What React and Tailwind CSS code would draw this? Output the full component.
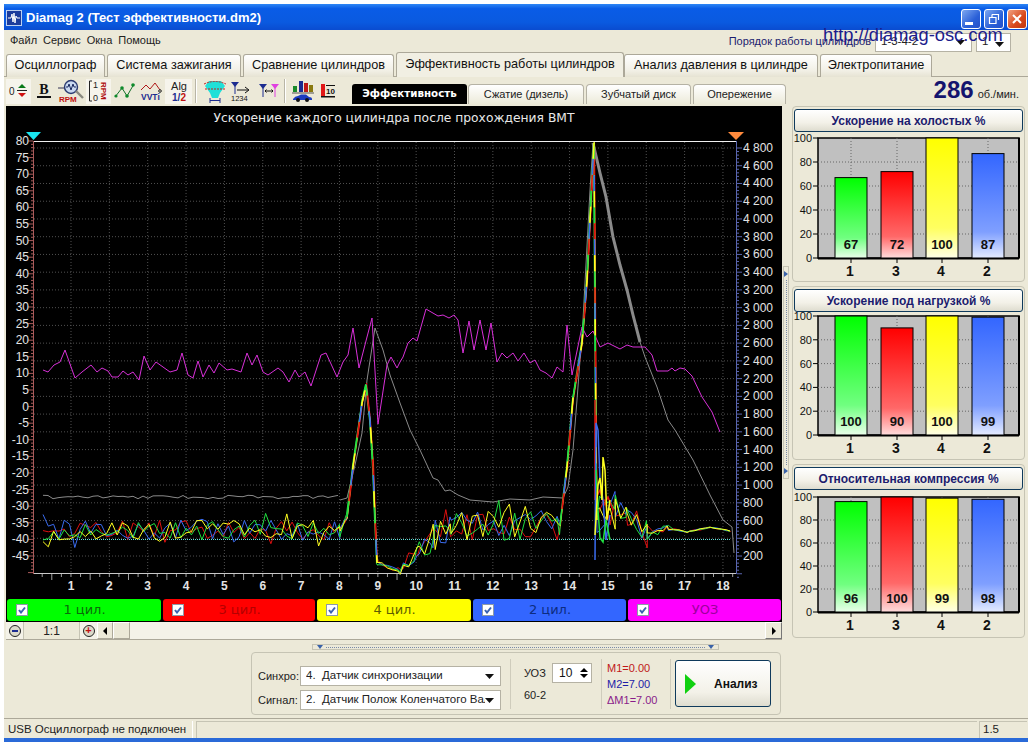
import React from 'react';

// hand-read traces of the chart, in page pixels
const MAGENTA = [[43,370],[48,372],[54,365],[60,362],[65,350],[75,378],[82,372],[91,365],[97,372],[102,368],[108,371],[112,377],[118,377],[123,371],[128,375],[133,372],[139,380],[144,356],[150,370],[156,362],[163,367],[170,372],[177,370],[182,353],[188,375],[193,378],[198,361],[203,377],[209,365],[214,373],[219,363],[227,370],[232,369],[241,372],[247,353],[252,365],[257,355],[263,372],[268,375],[278,368],[283,372],[289,382],[295,370],[299,377],[305,372],[311,386],[321,355],[326,353],[337,377],[343,362],[348,355],[353,328],[359,368],[367,337],[372,318],[378,424],[387,365],[391,357],[397,368],[400,362],[403,357],[408,343],[413,338],[417,341],[426,309],[438,316],[443,315],[449,318],[454,315],[458,320],[463,353],[469,321],[474,350],[480,320],[486,350],[491,323],[497,362],[502,353],[507,358],[513,353],[518,361],[524,353],[530,363],[535,360],[540,370],[546,373],[552,378],[557,367],[563,372],[567,325],[572,375],[582,327],[587,337],[593,331],[600,347],[608,343],[620,349],[627,345],[633,347],[645,347],[652,355],[657,371],[668,371],[672,368],[675,371],[680,368],[685,369],[692,376],[702,397],[712,412],[720,432]];
const GRAY_THIN_A = [[340,500],[347,498],[355,465],[362,433],[367,380],[375,328],[383,350],[390,375],[400,403],[410,430],[420,450],[433,478],[438,480],[445,491],[450,490],[458,495],[470,500],[493,502],[510,499],[530,500],[543,497],[563,498],[568,487],[573,450],[577,400],[583,320],[590,190],[593,143]];
const GRAY_THICK = [[593,143],[600,173],[606,197],[613,237],[620,265],[627,290],[633,315],[640,342]];
const GRAY_THIN_B = [[640,342],[645,357],[657,387],[668,420],[675,430],[693,460],[710,495],[723,520],[732,527],[734,553]];
const ENVELOPE = [[38,530],[340,530],[347,517],[353,467],[362,403],[366,385],[370,420],[373,467],[375,520],[377,563],[400,571],[417,553],[433,536],[450,527],[560,525],[567,467],[573,398],[582,343],[587,280],[592,180],[594,143],[595,300],[596,450],[597,520],[615,507],[627,517],[647,533],[667,528],[687,532],[710,527],[730,531]];
const PEAKS = [
  [[347,517],[353,467],[362,403],[366,385],[370,420],[373,467],[375,520],[377,563]],
  [[560,525],[567,467],[573,398],[582,343],[587,280],[592,180],[594,143],[595,300],[596,450],[597,520]],
];
// the scatter right after the second peak, one line per cylinder
const AFTER_PEAK = [
  ['#e01010', [[595,400],[595,500],[600,490],[604,505],[608,497],[613,510]]],
  ['#3a6cf0', [[595,560],[596,423],[598,430],[600,480],[603,500],[606,540],[610,515]]],
  ['#20e040', [[596,470],[598,510],[600,538],[603,542],[606,520],[610,540]]],
  ['#ffff20', [[595,535],[598,485],[600,478],[602,500],[603,457],[605,470],[607,520],[610,500]]],
];
const PEAK_COLORS = ['#20e040', '#e01010', '#3a6cf0', '#ffff20'];

const mulberry = (seed) => () => {
  seed = (seed + 0x6d2b79f5) | 0;
  let t = Math.imul(seed ^ (seed >>> 15), 1 | seed);
  t = (t + Math.imul(t ^ (t >>> 7), 61 | t)) ^ t;
  return ((t ^ (t >>> 14)) >>> 0) / 4294967296;
};

const envelopeAt = (x) => {
  for (let i = 1; i < ENVELOPE.length; i++) {
    const [x0, y0] = ENVELOPE[i - 1];
    const [x1, y1] = ENVELOPE[i];
    if (x <= x1) return y0 + ((y1 - y0) * (x - x0)) / (x1 - x0 || 1);
  }
  return ENVELOPE[ENVELOPE.length - 1][1];
};

const noiseAt = (x) => {
  if (x < 342) return 10;
  if (x < 400) return 2;
  if (x < 420) return 6;
  if (x < 560) return 15;
  if (x < 597) return 1;
  if (x < 625) return 16;
  if (x < 650) return 10;
  if (x < 670) return 3;
  return 0.6;
};

const makeTrace = (seed, shift) => {
  const rnd = mulberry(seed);
  const xs = [];
  for (let x = 43; x < 730; x += 5.3) xs.push(x);
  ENVELOPE.slice(1).forEach(([x]) => xs.push(x + shift));
  xs.sort((a, b) => a - b);
  return xs
    .map((x) => {
      const spike = rnd() < 0.1 ? 1.8 : 1;
      const y = envelopeAt(x - shift) + (rnd() - 0.5) * 2 * noiseAt(x) * spike;
      return `${x.toFixed(1)},${y.toFixed(1)}`;
    })
    .join(' ');
};

const TRACES = [
  ['#e01010', makeTrace(11, 0.6)],
  ['#3a6cf0', makeTrace(23, 0)],
  ['#20e040', makeTrace(37, -0.5)],
  ['#ffff20', makeTrace(53, 0.2)],
];

const pts = (list) => list.map((p) => p.join(',')).join(' ');

const GRAY_FLAT = (() => {
  const rnd = mulberry(7);
  const out = [];
  for (let x = 43; x < 340; x += 5) out.push([x, (497 + (rnd() - 0.5) * 3.5).toFixed(1)]);
  return out;
})();

const LEFT_LABELS = Array.from({ length: 26 }, (_, i) => 80 - i * 5);
const RIGHT_LABELS = Array.from({ length: 24 }, (_, i) => 4800 - i * 200);
const X_LABELS = Array.from({ length: 18 }, (_, i) => i + 1);

const fmt = (v) => (v >= 1000 ? `${Math.floor(v / 1000)} ${String(v % 1000).padStart(3, '0')}` : v);
const leftY = (i) => 141 + i * 16.6;
const rightY = (i) => 148 + i * 17.74;
const xAt = (i) => 71 + i * 38.35;

function MainChart() {
  return (
    <svg viewBox="6 106 776 492" className="block w-[776px] h-[492px]">
      <rect x="6" y="106" width="776" height="492" fill="#000" />
      <text x="394" y="122" fill="#e8e8e8" fontSize="12.3" textAnchor="middle" fontFamily="DejaVu Sans">
        Ускорение каждого цилиндра после прохождения ВМТ
      </text>
      <polygon points="26,132 41,132 33.5,140" fill="#19e6f0" />
      <polygon points="728,132 744,132 736,140" fill="#ff8a3c" />

      {/* grid */}
      {RIGHT_LABELS.map((_, i) => (
        <line key={i} x1="34" x2="735" y1={rightY(i)} y2={rightY(i)} stroke="#505050" strokeDasharray="1 2" />
      ))}
      {X_LABELS.map((_, i) => (
        <line key={i} x1={xAt(i)} x2={xAt(i)} y1="142" y2="573" stroke="#505050" strokeDasharray="1 2" />
      ))}

      {/* axes */}
      <line x1="33" x2="736" y1="141.5" y2="141.5" stroke="#f0f0f0" />
      <line x1="33" x2="736" y1="573.5" y2="573.5" stroke="#c8c8c8" />
      <line x1="33.5" x2="33.5" y1="141" y2="574" stroke="#a85a5a" />
      <line x1="736.5" x2="736.5" y1="141" y2="574" stroke="#5a66b0" />
      {Array.from({ length: 131 }, (_, i) => (
        <line key={i} x1={i % 5 === 0 ? 28 : 31} x2="33" y1={141 + i * 3.32} y2={141 + i * 3.32} stroke="#a85a5a" />
      ))}
      {Array.from({ length: 122 }, (_, i) => (
        <line key={i} x1="737" x2={i % 5 === 0 ? 742 : 739} y1={148 + i * 3.548} y2={148 + i * 3.548} stroke="#5a66b0" />
      ))}
      {Array.from({ length: 73 }, (_, i) => (
        <line key={i} x1={42.2 + i * 9.59} x2={42.2 + i * 9.59} y1="574" y2={(i + 3) % 4 === 0 ? 580 : 577} stroke="#a0a0a0" />
      ))}

      <g fontSize="12" fill="#e4e4e4">
        {LEFT_LABELS.map((v, i) => (
          <text key={v} x="29" y={leftY(i) + 4} textAnchor="end">{v}</text>
        ))}
        {RIGHT_LABELS.map((v, i) => (
          <text key={v} x="743" y={rightY(i) + 4}>{fmt(v)}</text>
        ))}
        {X_LABELS.map((v, i) => (
          <text key={v} x={xAt(i)} y="590" textAnchor="middle" fontWeight="700">{v}</text>
        ))}
      </g>

      {/* traces */}
      <line x1="43" x2="730" y1="539.5" y2="539.5" stroke="#60e0d8" strokeDasharray="1 1" />
      <polyline points={pts(GRAY_FLAT)} fill="none" stroke="#8a8a8a" />
      <polyline points={pts(GRAY_THIN_A)} fill="none" stroke="#8a8a8a" />
      <polyline points={pts(GRAY_THICK)} fill="none" stroke="#8a8a8a" strokeWidth="3" />
      <polyline points={pts(GRAY_THIN_B)} fill="none" stroke="#8a8a8a" />
      <polyline points={pts(MAGENTA)} fill="none" stroke="#d830d8" />
      {TRACES.map(([color, p]) => (
        <polyline key={color} points={p} fill="none" stroke={color} />
      ))}
      {PEAKS.map((peak, n) =>
        PEAK_COLORS.map((color, i) => (
          <polyline
            key={`${n}${color}`}
            points={pts(peak)}
            fill="none"
            stroke={color}
            strokeWidth="1.5"
            strokeDasharray="16 48"
            strokeDashoffset={-i * 16}
          />
        ))
      )}
      {AFTER_PEAK.map(([color, line]) => (
        <polyline key={color} points={pts(line)} fill="none" stroke={color} strokeWidth="1.5" />
      ))}
    </svg>
  );
}

const BAR_COLORS = [
  ['g', '#00ff00', '#70ff80', '#eaffea'],
  ['r', '#ff0000', '#ff6868', '#ffdcdc'],
  ['y', '#ffff00', '#ffff60', '#ffffe6'],
  ['b', '#3366ff', '#7f9fff', '#e4ebff'],
];
const BAR_X = [42, 88, 133, 179];
const BAR_NAMES = ['1', '3', '4', '2'];

function BarPanel({ id, title, values, top, height, panelH }) {
  const bottom = top + height;
  return (
    <div className="border border-[#c6c4b4] rounded-[4px] flex flex-col" style={{ height: panelH }}>
      <div className="mx-[1px] mt-[2px] h-[23px] shrink-0 border border-[#0f3a5c] rounded-[3px] bg-[linear-gradient(#ffffff,#f3f1e8_60%,#dedccf)] flex items-center justify-center text-[12px] font-bold text-[#1c1c6e] whitespace-nowrap">
        {title}
      </div>
      <svg className="block w-[231px] flex-1">
        <defs>
          {BAR_COLORS.map(([k, a, m, b]) => (
            <linearGradient key={k} id={`${id}${k}`} x1="0" x2="0" y1="0" y2="1">
              <stop offset="0" stopColor={a} />
              <stop offset="0.75" stopColor={m} />
              <stop offset="1" stopColor={b} />
            </linearGradient>
          ))}
        </defs>
        <rect x="25" y={top} width="201" height={height} fill="#c0c0c0" stroke="#000" strokeWidth="1.5" />
        {[20, 40, 60, 80].map((v) => {
          const y = bottom - (height * v) / 100;
          return <line key={v} x1="25" x2="226" y1={y} y2={y} stroke="#666" strokeDasharray="1 2" />;
        })}
        {BAR_X.map((x) => (
          <line key={x} x1={x + 16} x2={x + 16} y1={top} y2={bottom} stroke="#666" strokeDasharray="1 2" />
        ))}
        <line x1="25" x2="226" y1={bottom + 0.5} y2={bottom + 0.5} stroke="#000" strokeWidth="2" />
        <line x1="226" x2="226" y1={top} y2={bottom} stroke="#000" strokeWidth="2" />
        {[0, 20, 40, 60, 80, 100].map((v) => {
          const y = bottom - (height * v) / 100;
          return (
            <g key={v}>
              <line x1="20" x2="25" y1={y} y2={y} stroke="#000" />
              <text x="19" y={y + 4} fontSize="11" fill="#111" textAnchor="end">{v}</text>
            </g>
          );
        })}
        {BAR_X.map((x, i) => {
          const h = (height * values[i]) / 100;
          return (
            <g key={x}>
              <rect x={x} y={bottom - h} width="32" height={h} fill={`url(#${id}${BAR_COLORS[i][0]})`} stroke="#000" />
              <line x1={x + 16} x2={x + 16} y1={bottom} y2={bottom + 5} stroke="#000" />
              <text x={x + 16} y={bottom - 9} fontSize="13" fontWeight="700" fill="#111" textAnchor="middle">{values[i]}</text>
              <text x={x + 15} y={bottom + 18} fontSize="14" fontWeight="700" fill="#111" textAnchor="middle">{BAR_NAMES[i]}</text>
            </g>
          );
        })}
      </svg>
    </div>
  );
}

const Arrow = ({ className = '' }) => (
  <svg width="9" height="5" viewBox="0 0 9 5" className={`shrink-0 ${className}`}>
    <polygon points="0,0 9,0 4.5,5" fill="#111" />
  </svg>
);

function Select({ value, w, h = 'h-[20px]', arrowCls = '' }) {
  return (
    <div className={`${w} ${h} bg-white border border-[#b5b2a4] flex items-center pl-[5px] pr-[6px] text-[11.5px] text-[#222]`}>
      <span className="flex-1 min-w-0 overflow-hidden whitespace-pre">{value}</span>
      <Arrow className={arrowCls} />
    </div>
  );
}

const TOP_TABS = [
  ['Осциллограф', 'w-[99px]'],
  ['Система зажигания', 'w-[134px]'],
  ['Сравнение цилиндров', 'w-[151px]'],
];

function TopTab({ label, w, active }) {
  return (
    <div
      className={`${w} shrink-0 border border-[#aca899] border-b-0 rounded-t-[3px] flex items-center justify-center text-[12.7px] whitespace-nowrap text-[#111] ${
        active ? 'h-[25px] bg-[#f1efe3] -mt-[1px]' : 'h-[23px] bg-[linear-gradient(#ffffff,#f2f0e6_70%,#e6e3d3)] mt-[1px] mr-[2px]'
      }`}
    >
      {label}
    </div>
  );
}

function SubTab({ label, w }) {
  return (
    <div className={`${w} h-[20px] shrink-0 border border-[#b5b2a4] border-b-0 rounded-t-[4px] bg-[linear-gradient(#ffffff,#ecead9)] flex items-center justify-center text-[11px] text-[#222] mr-[2px]`}>
      {label}
    </div>
  );
}

function ToolBtn({ w, pressed, children }) {
  return (
    <div className={`${w} h-[25px] shrink-0 flex items-center justify-center ${pressed ? 'bg-[#f6f4ec]' : ''}`}>
      {children}
    </div>
  );
}

const LEGEND = [
  ['1 цил.', 'bg-[#00ff00]', 'text-[#0b6a0b]', 'w-[154px]'],
  ['3 цил.', 'bg-[#ff0000]', 'text-[#b40000]', 'w-[152px]'],
  ['4 цил.', 'bg-[#ffff00]', 'text-[#5e5e00]', 'w-[154px]'],
  ['2 цил.', 'bg-[#3366ff]', 'text-[#0d2c80]', 'w-[153px]'],
  ['УОЗ', 'bg-[#ff00ff]', 'text-[#9c009c]', 'w-[153px]'],
];

const Check = () => (
  <span className="w-[12px] h-[12px] bg-white border border-[#8d9aa8] flex items-center justify-center shrink-0">
    <svg width="8" height="8" viewBox="0 0 8 8">
      <path d="M1 4 L3 6.5 L7 1.5" fill="none" stroke="#3a62b0" strokeWidth="2" />
    </svg>
  </span>
);

const WinBtn = ({ close, children }) => (
  <div
    className={`w-[20px] h-[20px] rounded-[3px] border border-white flex items-center justify-center ${
      close ? 'bg-[linear-gradient(135deg,#f0a080,#d8481c_60%,#c03810)]' : 'bg-[linear-gradient(135deg,#7ea8f0,#2a60d8_60%,#2450c8)]'
    }`}
  >
    {children}
  </div>
);

export default function App() {
  return (
    <div className="w-[1032px] h-[742px] bg-white pt-[4px] pl-[4px] pr-[4px] overflow-hidden font-['Liberation_Sans',sans-serif]">
      <div className="w-[1024px] h-[738px] bg-[#ece9d8] flex flex-col relative">
        {/* title bar */}
        <div className="h-[26px] shrink-0 bg-[linear-gradient(#2d86f5,#0a5ce6_18%,#0a5ae0_70%,#0a4cd0)] flex items-center pl-[2px] pr-[1px]">
          <svg width="16" height="16" viewBox="0 0 16 16" className="mt-[1px]">
            <rect x="0.5" y="0.5" width="15" height="15" fill="#1c3c9c" stroke="#bcd0f0" />
            <path d="M2 8 H5 L6 4 L7 12 L8 3 L9 13 L10 6 L11 8 H14" fill="none" stroke="#fff" />
          </svg>
          <span className="ml-[4px] mt-[1px] text-[13px] font-bold text-white whitespace-nowrap">Diamag 2 (Тест эффективности.dm2)</span>
          <div className="ml-auto flex gap-[3px] mt-[3px]">
            <WinBtn>
              <span className="block w-[8px] h-[3px] bg-white mt-[9px] -ml-[4px]" />
            </WinBtn>
            <WinBtn>
              <svg width="12" height="12" viewBox="0 0 12 12">
                <path d="M4 1.5 H10.5 V7 M1.5 4.5 H8 V10.5 H1.5 Z M4 1.5 V4" fill="none" stroke="#fff" strokeWidth="1.2" />
              </svg>
            </WinBtn>
            <WinBtn close>
              <svg width="12" height="12" viewBox="0 0 12 12">
                <path d="M2 2 L10 10 M10 2 L2 10" stroke="#fff" strokeWidth="2" />
              </svg>
            </WinBtn>
          </div>
        </div>

        {/* menu */}
        <div className="h-[22px] shrink-0 flex items-center pl-[6px] text-[11px] text-[#222] relative">
          <div className="flex gap-[6px] -mt-[1px]">
            <span>Файл</span>
            <span>Сервис</span>
            <span>Окна</span>
            <span>Помощь</span>
          </div>
          <span className="ml-auto text-[#1c1c6e]">Порядок работы цилиндров</span>
          <div className="ml-[4px] mr-[17px] flex gap-[4px] mt-[2px]">
            <Select value="1-3-4-2" w="w-[97px]" h="h-[19px]" />
            <Select value="1" w="w-[35px]" h="h-[19px]" arrowCls="mt-[4px]" />
          </div>
          {/* the site address is stamped over the picture */}
          <span className="absolute left-[819px] -top-[9px] text-[18.3px] text-[#1c1c8c] whitespace-nowrap">
            http://diamag-osc.com
          </span>
        </div>

        {/* main tabs */}
        <div className="h-[25px] shrink-0 flex items-start pl-[2px] border-b border-[#aca899] pt-[1px]">
          {TOP_TABS.map(([label, w]) => (
            <TopTab key={label} label={label} w={w} />
          ))}
          <TopTab label="Эффективность работы цилиндров" w="w-[228px]" active />
          <TopTab label="Анализ давления в цилиндре" w="w-[194px]" />
          <TopTab label="Электропитание" w="w-[112px]" />
        </div>

        {/* toolbar */}
        <div className="h-[27px] shrink-0 flex items-end pl-[2px] relative">
          <div className="flex items-center h-[26px]">
            <ToolBtn w="w-[25px]" pressed>
              <svg width="22" height="20" viewBox="0 0 22 20">
                <text x="1" y="14" fontSize="10" fill="#222">0</text>
                <polygon points="14,3 18,7 10,7" fill="#0a7a1a" />
                <line x1="9" x2="19" y1="9.5" y2="9.5" stroke="#222" />
                <polygon points="10,12 18,12 14,16" fill="#d01010" />
              </svg>
            </ToolBtn>
            <ToolBtn w="w-[25px]">
              <svg width="20" height="20" viewBox="0 0 20 20">
                <text x="10" y="13" fontSize="14" fontWeight="700" fontFamily="Liberation Serif" fill="#111" textAnchor="middle">B</text>
                <rect x="3" y="15" width="14" height="2" fill="#111" />
              </svg>
            </ToolBtn>
            <ToolBtn w="w-[30px]">
              <svg width="26" height="24" viewBox="0 0 26 24">
                <line x1="0" x2="7" y1="9" y2="9" stroke="#335" />
                <circle cx="13" cy="8" r="6.5" fill="#c9d8f0" stroke="#2a3a70" strokeWidth="1.4" />
                <path d="M8 8 H10 L11 5 L13 11 L15 5 L16 8 H18" fill="none" stroke="#1a2a60" />
                <line x1="18" x2="25" y1="12" y2="19" stroke="#8a8a80" strokeWidth="2.4" />
                <text x="1" y="23" fontSize="8" fontWeight="700" fill="#c01010">RPM</text>
              </svg>
            </ToolBtn>
            <ToolBtn w="w-[25px]" pressed>
              <svg width="22" height="24" viewBox="0 0 22 24">
                <path d="M4 2 H1.5 V22 H4" fill="none" stroke="#222" />
                <text x="5" y="9" fontSize="9" fill="#222">1</text>
                <text x="5" y="22" fontSize="9" fill="#222">0</text>
                <text x="0" y="0" fontSize="8" fontWeight="700" fill="#b01010" transform="translate(13 3) rotate(90)">RPM</text>
              </svg>
            </ToolBtn>
            <ToolBtn w="w-[27px]">
              <svg width="22" height="20" viewBox="0 0 22 20">
                <path d="M1 16 L8 7 L13 15 L20 3" fill="none" stroke="#14702a" />
                <g fill="#0e8a2a">
                  <circle cx="2" cy="15" r="1.6" />
                  <circle cx="8" cy="7" r="1.8" />
                  <circle cx="13" cy="15" r="1.8" />
                  <circle cx="19" cy="4" r="1.8" />
                </g>
              </svg>
            </ToolBtn>
            <ToolBtn w="w-[27px]">
              <svg width="23" height="22" viewBox="0 0 23 22">
                <path d="M1 10 L6 5 L10 9 L15 3 L20 10" fill="none" stroke="#b01818" />
                <text x="1" y="20" fontSize="8.5" fontWeight="700" fill="#1c2c90">VVTi</text>
                <circle cx="20" cy="11" r="1.3" fill="none" stroke="#222" />
              </svg>
            </ToolBtn>
            <ToolBtn w="w-[27px]" pressed>
              <svg width="22" height="24" viewBox="0 0 22 24">
                <text x="11" y="11" fontSize="11" fill="#222" textAnchor="middle">Alg</text>
                <text x="11" y="22" fontSize="10" fontWeight="700" textAnchor="middle">
                  <tspan fill="#1c2c90">1/</tspan>
                  <tspan fill="#c01010">2</tspan>
                </text>
              </svg>
            </ToolBtn>
            <div className="w-[2px] h-[24px] bg-[#b8b5a6] border-r border-white ml-[3px] mr-[5px]" />
            <ToolBtn w="w-[26px]">
              <svg width="24" height="24" viewBox="0 0 24 24">
                <path d="M6 2 L18 2 L22 7 L17 14 L15 19 L9 19 L7 14 L2 7 Z" fill="#20e0d8" />
                <path d="M1 5 Q12 0 23 5 M2 10 H22" fill="none" stroke="#c02020" strokeDasharray="2 1" />
                <path d="M7 21.5 H17 M7 19 V24 M17 19 V24" stroke="#1c2c90" fill="none" />
              </svg>
            </ToolBtn>
            <ToolBtn w="w-[26px]">
              <svg width="22" height="22" viewBox="0 0 22 22">
                <polygon points="1,2 9,2 5,7" fill="#1c2c90" />
                <line x1="5" x2="5" y1="6" y2="14" stroke="#1c2c90" />
                <path d="M7 10 H18 M15 7 L19 10 L15 13" fill="none" stroke="#111" />
                <text x="1" y="21" fontSize="7.5" fill="#111">1234</text>
              </svg>
            </ToolBtn>
            <div className="ml-[3px]">
              <ToolBtn w="w-[24px]">
                <svg width="22" height="20" viewBox="0 0 22 20">
                  <polygon points="1,3 9,3 5,8" fill="#1c2c90" />
                  <line x1="5" x2="5" y1="7" y2="16" stroke="#1c2c90" />
                  <polygon points="13,3 21,3 17,8" fill="#e040e0" />
                  <line x1="17" x2="17" y1="7" y2="16" stroke="#e040e0" />
                  <path d="M7 10 H15 M8.5 8.5 L7 10 L8.5 11.5 M13.5 8.5 L15 10 L13.5 11.5" fill="none" stroke="#111" />
                </svg>
              </ToolBtn>
            </div>
            <div className="w-[2px] h-[24px] bg-[#b8b5a6] border-r border-white ml-[3px] mr-[5px]" />
            <ToolBtn w="w-[24px]">
              <svg width="22" height="24" viewBox="0 0 22 24">
                <rect x="1" y="7" width="4" height="6" fill="#1a8a2a" />
                <rect x="7" y="2" width="4" height="11" fill="#1c2c90" />
                <rect x="12" y="4" width="4" height="9" fill="#c01818" />
                <rect x="17" y="6" width="4" height="7" fill="#8a7a10" />
                <line x1="0" x2="22" y1="14" y2="14" stroke="#555" />
                <path d="M1 20 Q3 17 6 17 L9 15.5 H14 L17 18 Q20 18 20 20 V21 H1 Z" fill="#1c3cc0" />
                <circle cx="6" cy="21" r="2" fill="#111" />
                <circle cx="15" cy="21" r="2" fill="#111" />
              </svg>
            </ToolBtn>
            <div className="ml-[2px]">
              <ToolBtn w="w-[22px]">
                <svg width="18" height="18" viewBox="0 0 18 18">
                  <rect x="2" y="2" width="4" height="12" fill="#e01818" />
                  <rect x="2" y="14" width="14" height="1.5" fill="#111" />
                  <text x="7" y="12" fontSize="8" fontWeight="700" fill="#111">10</text>
                  <rect x="7" y="3" width="9" height="1" fill="#111" />
                </svg>
              </ToolBtn>
            </div>
          </div>
          <div className="ml-[13px] flex items-end">
            <div className="w-[115px] h-[20px] bg-black rounded-t-[3px] flex items-center justify-center text-[10.3px] font-bold text-white mr-[1px] font-['DejaVu_Sans']">
              Эффективность
            </div>
            <SubTab label="Сжатие (дизель)" w="w-[116px]" />
            <SubTab label="Зубчатый диск" w="w-[105px]" />
            <SubTab label="Опережение" w="w-[93px]" />
          </div>
          <div className="ml-auto mr-[9px] mb-[1px] flex items-baseline">
            <span className="text-[24px] leading-[26px] font-bold text-[#14146e]">286</span>
            <span className="ml-[4px] text-[11px] text-[#222]">об./мин.</span>
          </div>
        </div>

        {/* chart and side panels */}
        <div className="h-[536px] shrink-0 flex pl-[2px]">
          <div className="w-[776px] pt-[2px]">
            <MainChart />
            <div className="bg-black h-[24px] flex gap-[2px] p-[1px]">
              {LEGEND.map(([label, bg, fg, w]) => (
                <div key={label} className={`${w} ${bg} ${fg} shrink-0 rounded-[3px] flex items-center pl-[9px] text-[13px] font-['DejaVu_Sans']`}>
                  <Check />
                  <span className="flex-1 text-center pr-[20px]">{label}</span>
                </div>
              ))}
            </div>
            <div className="h-[18px] flex items-stretch bg-[#f4f2e8] border-b border-[#aca899]">
              <div className="w-[17px] flex items-center justify-center">
                <span className="w-[12px] h-[12px] rounded-full border border-[#222] bg-[#dcdaca] flex items-center justify-center">
                  <span className="w-[6px] h-[2px] bg-[#1c2c90]" />
                </span>
              </div>
              <div className="w-[57px] bg-[#ece9d8] border-x border-[#c6c4b4] text-center text-[12px] leading-[18px] text-[#222]">1:1</div>
              <div className="w-[17px] flex items-center justify-center">
                <span className="w-[12px] h-[12px] rounded-full border border-[#222] bg-[#dcdaca] flex items-center justify-center text-[11px] leading-none font-bold text-[#c01010]">+</span>
              </div>
              <div className="w-[16px] bg-[#ece9d8] border border-white border-r-[#aca899] border-b-[#aca899] flex items-center justify-center">
                <span className="w-0 h-0 border-y-[4px] border-y-transparent border-r-[4px] border-r-black" />
              </div>
              <div className="w-[17px] bg-[#ece9d8] border border-white border-r-[#aca899] border-b-[#aca899]" />
              <div className="flex-1" />
              <div className="w-[17px] bg-[#ece9d8] border border-white border-r-[#777] border-b-[#777] flex items-center justify-center">
                <span className="w-0 h-0 border-y-[4px] border-y-transparent border-l-[4px] border-l-black" />
              </div>
            </div>
          </div>
          <div className="ml-[1px] w-[6px] h-[213px] self-center border border-[#c6c4b4] flex flex-col justify-between items-center py-[4px]">
            <span className="w-0 h-0 border-y-[3px] border-y-transparent border-l-[4px] border-l-[#3a62a8]" />
            <span className="flex-1 my-[3px] border-l border-dotted border-[#7a8aa8]" />
            <span className="w-0 h-0 border-y-[3px] border-y-transparent border-l-[4px] border-l-[#3a62a8]" />
          </div>
          <div className="ml-[3px] w-[233px] pt-[2px] flex flex-col gap-[4px]">
            <BarPanel id="p1" title="Ускорение на холостых %" values={[67, 72, 100, 87]} top={6} height={120} panelH={176} />
            <BarPanel id="p2" title="Ускорение под нагрузкой %" values={[100, 90, 100, 99]} top={4} height={119} panelH={174} />
            <BarPanel id="p3" title="Относительная компрессия %" values={[96, 100, 99, 98]} top={7} height={115} panelH={174} />
          </div>
        </div>

        {/* horizontal splitter */}
        <div className="mt-[4px] ml-[308px] w-[407px] h-[6px] shrink-0 border border-[#c6c4b4] flex items-center justify-between px-[4px]">
          <span className="w-0 h-0 border-x-[3px] border-x-transparent border-t-[4px] border-t-[#3a62a8]" />
          <span className="flex-1 mx-[3px] border-t border-dotted border-[#7a8aa8]" />
          <span className="w-0 h-0 border-x-[3px] border-x-transparent border-t-[4px] border-t-[#3a62a8]" />
        </div>

        {/* analysis panel */}
        <div className="mt-[2px] ml-[247px] w-[530px] h-[63px] shrink-0 border border-[#c6c4b4] rounded-[4px] flex items-center pl-[6px] text-[12px] text-[#222]">
          <div className="w-[243px] mt-[9px] flex flex-col gap-[4px]">
            <div className="flex items-center">
              <span className="w-[42px] text-[11px]">Синхро:</span>
              <Select value="4.  Датчик синхронизации" w="w-[201px]" />
            </div>
            <div className="flex items-center">
              <span className="w-[42px] text-[11px]">Сигнал:</span>
              <Select value="2.  Датчик Полож Коленчатого Вала" w="w-[201px]" />
            </div>
          </div>
          <div className="ml-[9px] w-px h-[50px] bg-[#cfccbc]" />
          <div className="ml-[13px] w-[68px] flex flex-col gap-[4px]">
            <div className="flex items-center">
              <span className="w-[28px] text-[11px]">УОЗ</span>
              <div className="w-[40px] h-[20px] bg-white border border-[#b5b2a4] flex items-center pl-[6px] pr-[3px] text-[12px] text-[#111]">
                <span className="flex-1">10</span>
                <span className="flex flex-col gap-[2px]">
                  <span className="w-0 h-0 border-x-[4px] border-x-transparent border-b-[4px] border-b-black" />
                  <span className="w-0 h-0 border-x-[4px] border-x-transparent border-t-[4px] border-t-black" />
                </span>
              </div>
            </div>
            <span className="text-[11px]">60-2</span>
          </div>
          <div className="ml-[9px] w-px h-[50px] bg-[#cfccbc]" />
          <div className="ml-[5px] w-[63px] flex flex-col text-[11px] leading-[16px]">
            <span className="text-[#c01818]">M1=0.00</span>
            <span className="text-[#1c1ca8]">M2=7.00</span>
            <span className="text-[#8a1c8a]">ΔM1=7.00</span>
          </div>
          <div className="w-px h-[50px] bg-[#cfccbc]" />
          <div className="ml-[4px] w-[96px] h-[47px] border border-[#0f3a5c] rounded-[3px] bg-[linear-gradient(#ffffff,#f3f1e8_70%,#dedccf)] flex items-center pl-[9px]">
            <span className="w-0 h-0 border-y-[10px] border-y-transparent border-l-[11px] border-l-[#10d010]" />
            <span className="ml-[18px] text-[12px] font-bold text-[#111]">Анализ</span>
          </div>
        </div>

        {/* status bar */}
        <div className="mt-[3px] h-[20px] shrink-0 border-t border-[#aca899] flex items-stretch text-[11.5px] text-[#222] pt-[2px]">
          <div className="w-[189px] pl-[4px] border-r border-white flex items-center whitespace-nowrap">USB Осциллограф не подключен</div>
          <div className="flex-1 ml-[3px] border-l border-t border-[#c6c4b4]" />
          <div className="w-[48px] ml-[2px] border-l border-t border-[#c6c4b4] pl-[3px] flex items-center mr-[1px]">1.5</div>
        </div>
        <div className="flex-1 bg-[#2a6ad8]" />
      </div>
    </div>
  );
}
